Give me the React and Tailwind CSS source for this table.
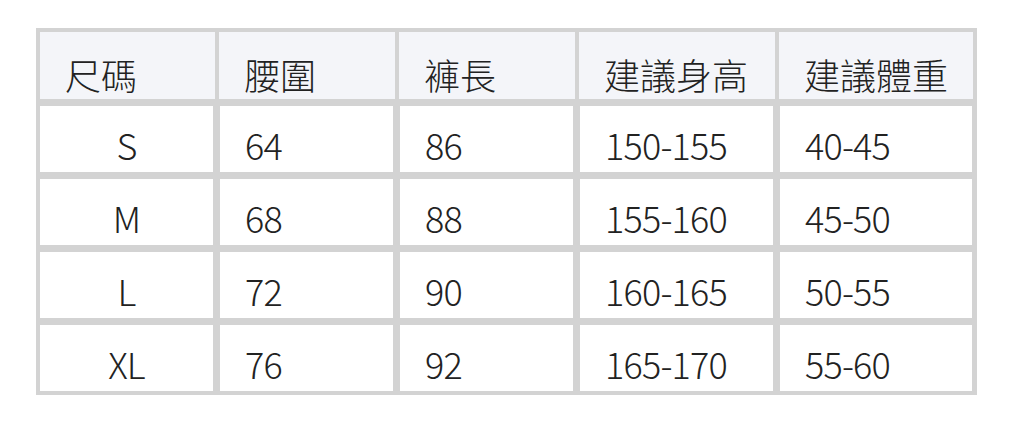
const headers = ["尺碼", "腰圍", "褲長", "建議身高", "建議體重"];

const rows = [
  ["S", "64", "86", "150-155", "40-45"],
  ["M", "68", "88", "155-160", "45-50"],
  ["L", "72", "90", "160-165", "50-55"],
  ["XL", "76", "92", "165-170", "55-60"],
];

export default function App() {
  return (
    <div
      className="min-h-screen bg-white pl-[36px] pt-[28px] text-[36px] font-light leading-[36px] text-[#222]"
      style={{ fontFamily: '"Noto Sans CJK TC", "Noto Sans", sans-serif' }}
    >
      <div className="w-[941px] bg-[#d3d3d3] p-[4px]">
        <div className="grid grid-cols-[175px_176px_176px_196px_194px] gap-[4px]">
          {headers.map((h) => (
            <div key={h} className="h-[67px] bg-[#f4f5f9] pl-[25px] pt-[24px]">
              {h}
            </div>
          ))}
        </div>
        {rows.map((r) => (
          <div
            key={r[0]}
            className="mt-[7px] grid grid-cols-[173px_173px_173px_193px_192px] gap-[7px] tracking-[-0.8px]"
          >
            {r.map((c, i) => (
              <div
                key={i}
                className={
                  i === 0
                    ? "h-[66px] bg-white pt-[20px] text-center"
                    : "h-[66px] bg-white pl-[25px] pt-[20px]"
                }
              >
                {c}
              </div>
            ))}
          </div>
        ))}
      </div>
    </div>
  );
}
